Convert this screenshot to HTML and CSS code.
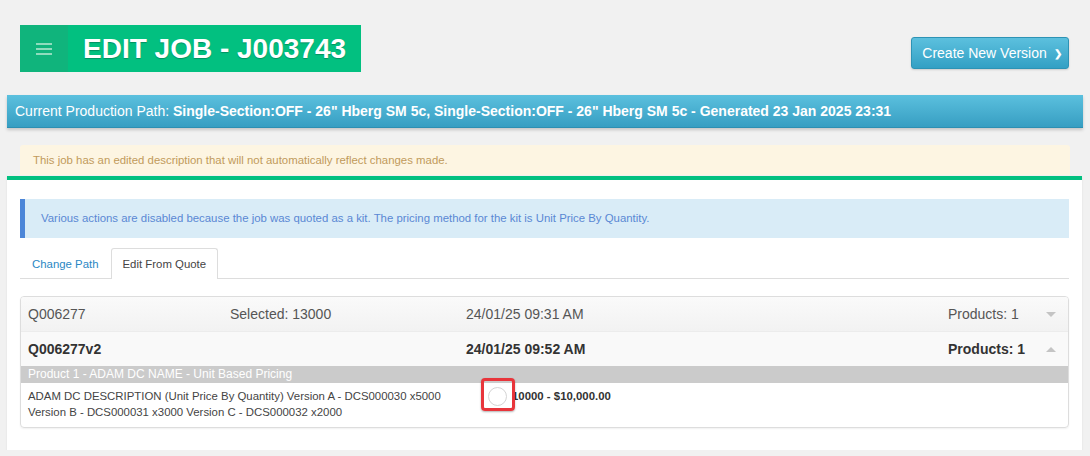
FILE: index.html
```html
<!DOCTYPE html>
<html lang="en">
<head>
    <meta charset="UTF-8">
    <meta name="viewport" content="width=device-width, initial-scale=1.0">
    <title>Edit Job - J003743</title>
    <link rel="stylesheet" href="styles.css">
</head>
<body>
    <div class="page">
        <div class="page-header">
            <div class="job-title">
                <div class="menu-toggle">
                    <span></span><span></span><span></span>
                </div>
                <h1>EDIT JOB - J003743</h1>
            </div>
            <button class="btn-version" type="button">Create New Version <span class="chevron">&#10095;</span></button>
        </div>

        <div class="path-bar">
            Current Production Path: <b>Single-Section:OFF - 26" Hberg SM 5c, Single-Section:OFF - 26" Hberg SM 5c - Generated 23 Jan 2025 23:31</b>
        </div>

        <div class="alert-warning">This job has an edited description that will not automatically reflect changes made.</div>

        <div class="panel">
            <div class="alert-info">Various actions are disabled because the job was quoted as a kit. The pricing method for the kit is Unit Price By Quantity.</div>

            <ul class="tabs">
                <li><a href="#">Change Path</a></li>
                <li class="active"><a href="#">Edit From Quote</a></li>
            </ul>

            <div class="quote-card">
                <div class="quote-row">
                    <div>Q006277</div>
                    <div>Selected: 13000</div>
                    <div>24/01/25 09:31 AM</div>
                    <div>Products: 1</div>
                    <div class="caret down"></div>
                </div>
                <div class="quote-row open">
                    <div>Q006277v2</div>
                    <div></div>
                    <div>24/01/25 09:52 AM</div>
                    <div>Products: 1</div>
                    <div class="caret up"></div>
                </div>
                <div class="product-head">Product 1 - ADAM DC NAME - Unit Based Pricing</div>
                <div class="product-body">
                    <div class="product-desc">ADAM DC DESCRIPTION (Unit Price By Quantity) Version A - DCS000030 x5000 Version B - DCS000031 x3000 Version C - DCS000032 x2000</div>
                    <div class="radio-cell">
                        <span class="radio"></span>
                        <span class="highlight"></span>
                    </div>
                    <div class="product-price">10000 - $10,000.00</div>
                </div>
            </div>
        </div>
    </div>
</body>
</html>
```

FILE: styles.css
```css
body {
    font-family: "Liberation Sans", Arial, sans-serif;
    background: #f1f1f1;
    margin: 0;
    padding: 0;
    color: #333;
}
.page {
    padding: 25px 7px 0 7px;
}
.page-header {
    display: flex;
    justify-content: space-between;
    align-items: flex-start;
    padding: 0 14px 0 13px;
}
.job-title {
    display: flex;
    height: 47px;
    background: #02c080;
}
.menu-toggle {
    width: 48px;
    background: #10b47c;
    display: flex;
    flex-direction: column;
    justify-content: center;
    align-items: center;
    gap: 3px;
}
.menu-toggle span {
    display: block;
    width: 16px;
    height: 2px;
    background: #8fdcbd;
}
.job-title h1 {
    margin: 0;
    padding: 0 15px 0 15px;
    font-size: 28px;
    font-weight: 700;
    line-height: 47px;
    color: #fff;
    text-shadow: 0 1px 1px rgba(0,0,0,0.25);
}
.btn-version {
    margin-top: 12px;
    height: 32px;
    width: 158px;
    padding: 0 0 0 4px;
    border: 1px solid #2d93b5;
    border-radius: 3px;
    background: linear-gradient(#5cc0de, #33a0c4);
    color: #fff;
    font-family: inherit;
    font-size: 14px;
    cursor: pointer;
    box-shadow: 0 1px 2px rgba(0,0,0,0.15);
}
.chevron {
    font-size: 10px;
    font-weight: 700;
    margin-left: 3px;
    position: relative;
    top: -1px;
}
.path-bar {
    margin-top: 23px;
    height: 33px;
    line-height: 33px;
    padding: 0 8px;
    background: linear-gradient(#5bc0de, #379ec2);
    border-bottom: 1px solid #2d8fb2;
    box-shadow: 0 2px 3px rgba(0,0,0,0.18);
    color: #fff;
    font-size: 14px;
    box-sizing: border-box;
    white-space: nowrap;
}
.path-bar b {
    font-weight: 700;
}
.alert-warning {
    margin: 17px 13px 0 13px;
    height: 30px;
    line-height: 30px;
    padding: 0 13px;
    background: #fdf5e2;
    border-radius: 3px 3px 0 0;
    color: #c19a5b;
    font-size: 11.4px;
}
.panel {
    margin: 1px 1px 0 0;
    background: #fff;
    border-top: 4px solid #02c080;
    padding: 19px 13px 22px 13px;
    box-shadow: 0 1px 2px rgba(0,0,0,0.08);
}
.alert-info {
    height: 39px;
    line-height: 39px;
    padding: 0 16px;
    background: #d9ecf7;
    border-left: 5px solid #4c86d8;
    color: #5a88d4;
    font-size: 11.4px;
}
.tabs {
    list-style: none;
    margin: 10px 0 0 0;
    padding: 0;
    display: flex;
    height: 30px;
    border-bottom: 1px solid #ddd;
}
.tabs li {
    margin-bottom: -1px;
}
.tabs a {
    display: block;
    height: 30px;
    line-height: 30px;
    padding: 0 11px;
    font-size: 11.4px;
    color: #2a87c4;
    text-decoration: none;
    border: 1px solid transparent;
    border-bottom: none;
    box-sizing: border-box;
}
.tabs li.active a {
    color: #444;
    background: #fff;
    border-color: #ddd;
    border-radius: 3px 3px 0 0;
    height: 31px;
}
.quote-card {
    margin-top: 17px;
    border: 1px solid #ddd;
    border-radius: 4px;
    overflow: hidden;
    box-shadow: 0 1px 2px rgba(0,0,0,0.06);
}
.quote-row {
    display: grid;
    grid-template-columns: 202px 236px 482px 97px auto;
    align-items: center;
    height: 34px;
    padding: 0 13px 0 7px;
    box-sizing: border-box;
    background: linear-gradient(#fafafa, #f2f2f2);
    color: #555;
    font-size: 14px;
}
.quote-row.open {
    height: 35px;
    background: #f9f9f9;
    border-top: 1px solid #ececec;
    color: #333;
    font-weight: 700;
}
.caret {
    width: 0;
    height: 0;
    border-left: 5px solid transparent;
    border-right: 5px solid transparent;
    margin-left: 1px;
}
.caret.down {
    border-top: 5px solid #c4c4c4;
}
.caret.up {
    border-bottom: 5px solid #c4c4c4;
}
.product-head {
    height: 17px;
    line-height: 17px;
    padding: 0 7px;
    background: #cbcbcb;
    color: #fff;
    font-size: 12px;
}
.product-body {
    display: flex;
    align-items: flex-start;
    padding: 5px 7px 7px 7px;
    font-size: 11.4px;
}
.product-desc {
    width: 453px;
    line-height: 16px;
    color: #444;
}
.radio-cell {
    position: relative;
    width: 31px;
    height: 16px;
}
.radio {
    position: absolute;
    left: 7px;
    top: -1px;
    width: 17px;
    height: 17px;
    border: 1px solid #d4d4d4;
    border-radius: 50%;
    background: #fff;
}
.highlight {
    position: absolute;
    left: 0;
    top: -10px;
    width: 28px;
    height: 27px;
    border: 3px solid #e8353b;
    border-radius: 4px;
    box-shadow: 0 1px 2px rgba(0,0,0,0.3);
}
.product-price {
    line-height: 16px;
    font-size: 11.4px;
    font-weight: 700;
    color: #333;
}
```
